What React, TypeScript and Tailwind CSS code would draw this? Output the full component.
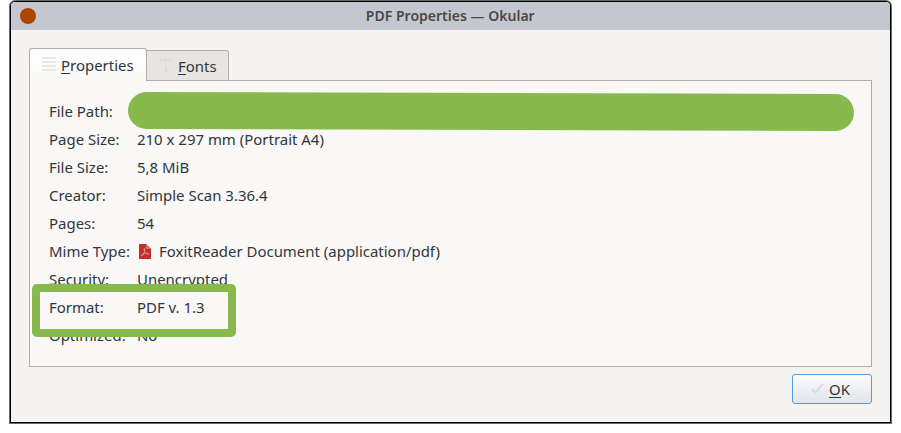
import type { ReactNode } from "react";

const rows: { label: string; value: ReactNode }[] = [
  { label: "File Path:", value: "" },
  { label: "Page Size:", value: "210 x 297 mm (Portrait A4)" },
  { label: "File Size:", value: "5,8 MiB" },
  { label: "Creator:", value: "Simple Scan 3.36.4" },
  { label: "Pages:", value: "54" },
  {
    label: "Mime Type:",
    value: (
      <>
        <PdfIcon />
        FoxitReader Document (application/pdf)
      </>
    ),
  },
  { label: "Security:", value: "Unencrypted" },
  { label: "Format:", value: "PDF v. 1.3" },
  { label: "Optimized:", value: "No" },
];

function PdfIcon() {
  return (
    <svg className="ml-0.5 mr-2 mt-0.5 h-[15px] w-3 shrink-0" viewBox="0 0 12 15">
      <path d="M0 0h7l5 5v10H0z" fill="#c1302c" />
      <path d="M7 0l5 5H7z" fill="#dd6f6b" />
      <path
        d="M5.300 4.500c.9 0 .5 2.200-.3 4.300C4.200 11 3 12.300 2.400 12c-.6-.5 1.200-1.900 3.200-2.400 2.300-.5 4.200-.3 4.200.4 0 .8-2.100 0-3.300-1.400C5.400 7.300 4.600 4.600 5.300 4.500z"
        fill="none"
        stroke="#f0c4c2"
        strokeWidth=".6"
      />
    </svg>
  );
}

function Mnemonic({ text }: { text: string }) {
  return (
    <span>
      <span className="inline-block border-b border-[#31363b] leading-[15px]">{text[0]}</span>
      {text.slice(1)}
    </span>
  );
}

export default function App() {
  return (
    <div className="h-[433px] w-[901px] overflow-hidden bg-white pl-[9px] font-['Noto_Sans',sans-serif] text-[14.96px] text-[#31363b]">
      <div className="h-[424px] w-[883px] rounded-t-[6px] bg-[#6b6b6b] p-px">
        <div className="flex h-[422px] flex-col overflow-hidden rounded-t-[5px] border border-black bg-[#f5f4f2]">
          <header className="relative flex h-7 shrink-0 items-center justify-center bg-[#c4c7cf]">
            <span className="absolute left-[9px] top-[6px] size-4 rounded-full bg-[#ad4500]" />
            <h1 className="mb-0.5 origin-center scale-x-[0.935] whitespace-nowrap text-[15px] font-semibold text-[#4b4749]">
              PDF Properties — Okular
            </h1>
          </header>
          <main className="flex flex-1 flex-col px-[18px] pt-[18px]">
            <nav className="z-10 -mb-px flex h-[33px] items-end">
              <div className="flex h-[33px] w-[118px] rounded-t-[3px] border border-b-0 border-[#afaeac] bg-linear-to-b from-white to-[#f9f8f6] pl-3 pt-[7px]">
                <svg className="mt-px h-4 w-[14px]" viewBox="0 0 14 16">
                  <path d="M0 1h14M0 5h14M0 9h14M0 13h14" stroke="#e0e0df" strokeWidth="1.700" />
                </svg>
                <span className="ml-[5px] leading-[18px]">
                  <Mnemonic text="Properties" />
                </span>
              </div>
              <div className="flex h-[31px] w-[82px] rounded-tr-[3px] border border-l-0 border-[#b1b0ae] bg-[#e6e5e3] pl-[13px] pt-[6px]">
                <svg className="mt-px h-[15px] w-3" viewBox="0 0 12 15">
                  <path d="M.5 4V1.500h11V4M6 1.500v12M4 13.500h4" fill="none" stroke="#dadad9" strokeWidth="1.400" />
                </svg>
                <span className="ml-[6px] leading-[18px]">
                  <Mnemonic text="Fonts" />
                </span>
              </div>
            </nav>
            <section className="relative h-[287px] w-[843px] border border-[#aeadab] bg-[#f9f8f6] pl-[19px] pt-4">
              <dl>
                {rows.map((row) => (
                  <div key={row.label} className="flex h-7 items-center">
                    <dt className="w-[88px] whitespace-nowrap">{row.label}</dt>
                    <dd className="flex items-center whitespace-nowrap">{row.value}</dd>
                  </div>
                ))}
              </dl>
              <div className="absolute left-[98px] top-[12px] h-[37px] w-[726px] origin-center rotate-[0.16deg] rounded-full bg-[#88b94d]" />
              <div className="absolute left-[2px] top-[203px] h-[53px] w-[204px] rounded-[5px] border-8 border-[#88b94d]" />
            </section>
            <footer className="mt-[7px] flex w-[843px] justify-end">
              <button className="flex h-[30px] w-20 items-center rounded-[3px] border border-[#5697e6] bg-linear-to-b from-[#fcfcfb] to-[#e0e4ea] pl-[18px]">
                <svg className="h-3 w-[13px]" viewBox="0 0 13 12">
                  <path d="M.7 6l3.500 3.500L12 1" fill="none" stroke="#dcdddf" strokeWidth="2" />
                </svg>
                <span className="ml-[5px] leading-[18px]">
                  <Mnemonic text="OK" />
                </span>
              </button>
            </footer>
          </main>
        </div>
      </div>
    </div>
  );
}
